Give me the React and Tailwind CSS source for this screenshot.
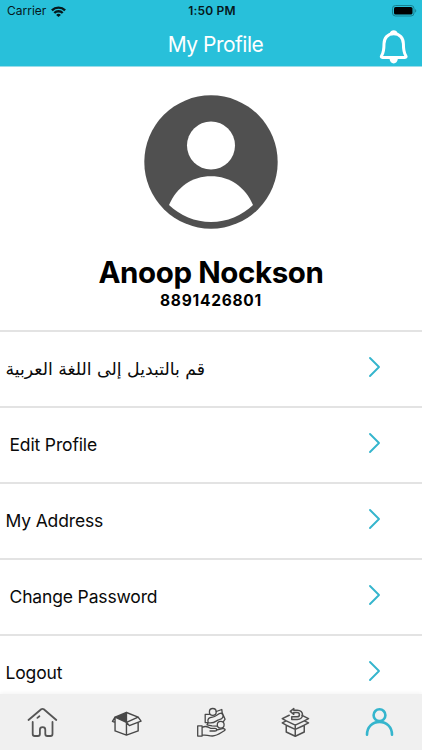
import React from "react";

const stroke = { fill: "none", strokeLinecap: "round", strokeLinejoin: "round" };

function Wifi() {
  return (
    <svg className="h-[11px] w-[15px]" viewBox="0 0 15 11" fill="none" stroke="#06181c" strokeWidth="2.4">
      <path d="M0.9 4.3a9.4 9.4 0 0 1 13.2 0M3.3 7a6 6 0 0 1 8.4 0" />
      <path d="M7.5 11 5.1 8.9a3.4 3.4 0 0 1 4.8 0Z" fill="#06181c" stroke="none" />
    </svg>
  );
}

function Battery() {
  return (
    <svg className="h-[12px] w-[25px]" viewBox="0 0 25 12">
      <rect x="0.5" y="0.5" width="21.5" height="10.5" rx="3" fill="none" stroke="#17808f" />
      <rect x="2" y="2" width="18.5" height="7.5" rx="1.6" fill="#000" />
      <path d="M23.2 4v3.6c1.4-.5 1.4-3.1 0-3.6Z" fill="#17808f" />
    </svg>
  );
}

function Bell() {
  return (
    <svg className="h-[36px] w-[30px]" viewBox="379 28.2 30 36" {...stroke} stroke="#fff" strokeWidth="3">
      <path d="M393.7 32.9c-6 0-9.7 4.4-9.7 10.1 0 7-.8 9.5-2.3 11.700-.8 1.200-.4 2 .8 2h22.400c1.200 0 1.600-.8.8-2-1.500-2.200-2.300-4.700-2.300-11.700 0-5.700-3.700-10.100-9.700-10.100Z" />
      <path d="M389.700 32.400c.6-2 2-3 4-3s3.400 1 4 3ZM389.500 58h8.400c-.5 3-2 4.600-4.200 4.600s-3.700-1.600-4.200-4.600Z" fill="#fff" stroke="none" />
    </svg>
  );
}

function Avatar() {
  return (
    <svg className="h-[134px] w-[134px]" viewBox="0 0 134 134">
      <circle cx="67" cy="67" r="66.7" fill="#505050" />
      <circle cx="67" cy="50.5" r="24" fill="#fff" />
      <path d="M25 110C33 92 48 81.3 67 81.3S101 92 109 110C98 120.5 83 127 67 127S36 120.5 25 110Z" fill="#fff" />
    </svg>
  );
}

function Chevron() {
  return (
    <svg className="mb-[4px] h-[22px] w-[14px]" viewBox="0 0 14 22" {...stroke} stroke="#35b5cd" strokeWidth="1.9">
      <path d="m2 2 9 9-9 9" />
    </svg>
  );
}

function Home() {
  return (
    <svg className="h-9 w-9" viewBox="24 704 36 36" {...stroke} stroke="#555" strokeWidth="1.8">
      <path d="m28.5 720 12.7-10.7q1.3-1 2.6 0L56.3 720M32.7 722v12q0 2 2 2h3.200q2 0 2-2v-4.300q0-2.500 2.700-2.500t2.700 2.500v4.300q0 2 2 2h3.200q2 0 2-2v-12M37.400 717.900l2-1.600" />
    </svg>
  );
}

function Package() {
  return (
    <svg className="h-9 w-9" viewBox="108.25 704 36 36" {...stroke} stroke="#484848" strokeWidth="1.4">
      <path d="m115.3 717.2 11.400-4.700v9.800Z" fill="#484848" />
      <path d="m126.700 712.500 11.700 4.600-11.700 5.200v12.800l-11.400-4.200v-13.700l-2.600 4.100 2.600 1.100M126.700 735.100l11.700-4.200v-8M138.400 717.100l2.900 4.100-11.700 4.400-2.900-3.300" />
    </svg>
  );
}

function MoneyHand() {
  return (
    <svg className="h-9 w-9" viewBox="192.5 704 36 36" {...stroke} stroke="#484848" strokeWidth="1.3">
      <path d="M197.200 725.900h4.400v10.200h-4.400ZM201.700 727.500c3-2 5.800-.9 8.300.8h4.500c2.300 0 2.300 2.700 0 2.700h-5M216 730l6-1.300c2.700-.4 3.500 1.300 1.400 2.300-4.700 2.900-7.200 5-11.400 5-4 0-6-1.200-10.300-1.200" />
      <circle cx="212.300" cy="711.900" r="3.400" />
      <circle cx="220.200" cy="724.700" r="3.400" />
      <path d="M208.900 714.300h-4.200v8.300h3M215.800 711.500l5.500-2 .4 3.300 2.900 6.400-1.700 2.500M207.700 722.600c-1.200-3.700.8-5.300 4.300-5.500 4.200-.2 5.200-4.200 9-3.900 3.200 2.700 1.200 5.800-2.200 6.500-3.500.6-4.500 4.400-11.100 2.900ZM207.700 722.600l-1.200 2.300 5 1 5 .2" />
    </svg>
  );
}

function ReturnBox() {
  return (
    <svg className="h-9 w-9" viewBox="276.75 704 36 36" {...stroke} stroke="#505050" strokeWidth="1.5">
      <path d="m286 725.200 9 4.200 9-4.200v6.800l-9 4.200-9-4.200ZM295 729.400v6.800M286 725.200l-4-2.300 4-2-4-2.300 7-3.300M304 725.200l4.300-2.300-4.300-2 4.300-2.300-6.500-3.200M286 720.900l9 4.200 9-4.200M295 725.100v4.300" />
      <path d="m293.500 708.600-3.500 2.800 3.500 2.900v-1.800h3.200c3.300 0 3.300 4.300 0 4.300h-5.200v2.700h5.500c7 0 7-9.300 0-9.300h-3.500Z" />
    </svg>
  );
}

function Person() {
  return (
    <svg className="h-9 w-9" viewBox="361 704 36 36" {...stroke} stroke="#35b5cd" strokeWidth="2.6">
      <circle cx="379.500" cy="715.200" r="5.900" />
      <path d="M367 734.700c0-7.700 5.500-12.800 12.500-12.800s12.500 5.100 12.500 12.800" />
    </svg>
  );
}

function Row({ children }) {
  return (
    <div className="flex h-[76px] shrink-0 items-center justify-between border-t-2 border-[#e3e3e3] pr-[40px] text-[#0a0a0a]">
      {children}
      <Chevron />
    </div>
  );
}

export default function App() {
  return (
    <div className="flex h-[750px] w-[422px] flex-col overflow-hidden bg-white font-['Inter',sans-serif]">
      <header className="flex h-[67px] shrink-0 flex-col border-b border-[#9addea] bg-[#28c0da]">
        <div className="grid h-[22px] grid-cols-3 items-center pl-[7px] pr-[5px] text-[#06181c]">
          <div className="flex items-center gap-[5px] text-[12px] leading-none">
            Carrier <Wifi />
          </div>
          <div className="text-center text-[12px] font-semibold leading-none tracking-[0.2px]">1:50 PM</div>
          <div className="flex justify-end"><Battery /></div>
        </div>
        <div className="grid h-[44px] grid-cols-[1fr_auto_1fr] items-center pl-[22px] pr-[13px]">
          <span />
          <h1 className="text-[21px] leading-none tracking-[-0.5px] text-white">My Profile</h1>
          <div className="flex justify-end pt-[5px]"><Bell /></div>
        </div>
      </header>
      <section className="flex h-[263px] shrink-0 flex-col items-center pt-[28px]">
        <Avatar />
        <h2 className="mt-[25px] text-[29.5px] font-bold leading-[36px] tracking-[-0.4px]">Anoop Nockson</h2>
        <p className="mt-px text-[15.5px] font-bold leading-[20px] tracking-[0.75px]">8891426801</p>
      </section>
      <main className="flex h-[364px] shrink-0 flex-col overflow-hidden text-[17.5px] tracking-[-0.15px]">
        <Row><span dir="rtl" className="ml-[5.5px] mt-px font-['DejaVu_Sans',sans-serif] text-[17.3px] tracking-normal">قم بالتبديل إلى اللغة العربية</span></Row>
        <Row><span className="ml-[9.5px] mt-px">Edit Profile</span></Row>
        <Row><span className="ml-[5.5px] mt-px">My Address</span></Row>
        <Row><span className="ml-[9.5px] mt-px">Change Password</span></Row>
        <Row><span className="ml-[5.5px] mt-px">Logout</span></Row>
      </main>
      <nav className="z-10 flex h-[56px] shrink-0 justify-between bg-[#f0f0f0] pl-[24px] pr-[25px] pt-[10px] shadow-[0_-1px_4px_rgba(0,0,0,0.05)]">
        <Home />
        <Package />
        <MoneyHand />
        <ReturnBox />
        <Person />
      </nav>
    </div>
  );
}
